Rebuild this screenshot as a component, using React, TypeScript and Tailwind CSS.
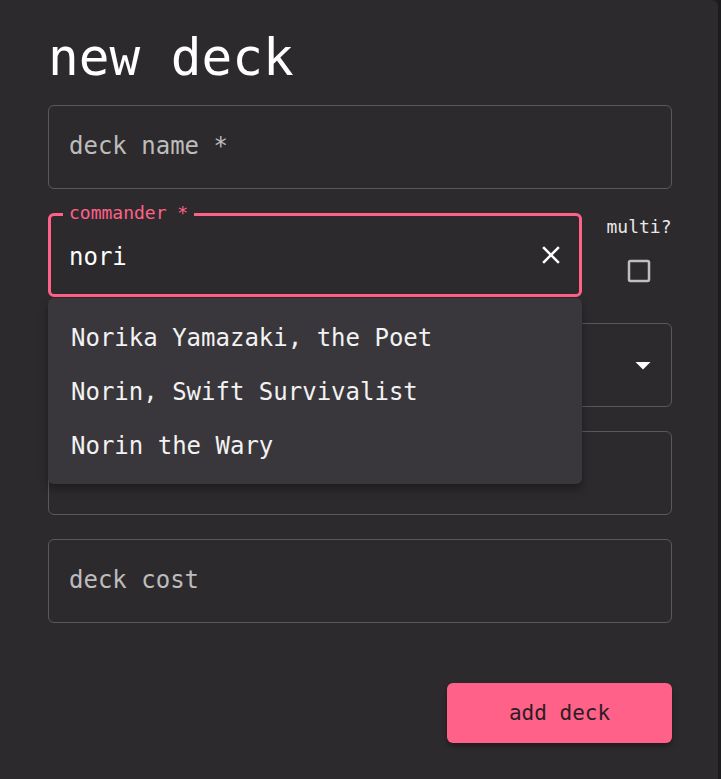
import React from "react";

const mono = { fontFamily: '"DejaVu Sans Mono", "Liberation Mono", monospace' };

function TextField({ label, mt }: { label: string; mt: string }) {
  return (
    <div className={`${mt} h-[84px] rounded-[6px] border border-[#5a585b] flex items-center pl-[20px] pb-[3px]`}>
      <span className="text-[24px] leading-[24px] text-[#bdbcbd]">{label}</span>
    </div>
  );
}

export default function App() {
  return (
    <div className="min-h-screen bg-[#1c1b1d]" style={mono}>
      <div className="w-[718px] h-[779px] bg-[#2d2a2e] rounded-tr-[6px] pl-12 pr-[46px] pt-[28px]">
        <h1 className="text-[51px] leading-[60px] text-white">new deck</h1>
        <div className="flex flex-col">
          <TextField label="deck name *" mt="mt-[17px]" />

          <div className="mt-[24px] flex">
            <div className="relative w-[534px] h-[84px] rounded-[6px] border-[3px] border-[#ff6188] flex items-center pl-[18px] pt-[3px]">
              <span className="absolute left-[12px] top-[-12px] px-[6px] bg-[#2d2a2e] text-[18px] leading-[18px] text-[#ff6188]">
                commander *
              </span>
              <span className="text-[24px] leading-[24px] text-white">nori</span>
              <svg
                className="absolute right-[13px] top-1/2 -translate-y-1/2"
                width="30"
                height="30"
                viewBox="0 0 24 24"
                fill="#ffffff"
              >
                <path d="M19 6.41 17.59 5 12 10.59 6.41 5 5 6.41 10.59 12 5 17.59 6.41 19 12 13.41 17.59 19 19 17.59 13.41 12z" />
              </svg>

              <div className="absolute left-[-3px] top-[calc(100%+4px)] w-[534px] rounded-[6px] bg-[#39373b] pt-[13px] pb-[11px] shadow-[0_5px_8px_rgba(0,0,0,0.35)] z-10">
                {["Norika Yamazaki, the Poet", "Norin, Swift Survivalist", "Norin the Wary"].map((t) => (
                  <div key={t} className="h-[54px] flex items-center pl-[23px] text-[24px] leading-[24px] text-[#f2f2f2]">
                    {t}
                  </div>
                ))}
              </div>
            </div>
            <div className="ml-auto flex flex-col items-center pt-[2px] w-[66px]">
              <span className="text-[18px] leading-[24px] text-[#e8e8e8]">multi?</span>
              <svg className="mt-[17px]" width="30" height="30" viewBox="0 0 24 24" fill="rgba(255,255,255,0.7)">
                <path d="M19 5v14H5V5h14m0-2H5c-1.11 0-2 .9-2 2v14c0 1.1.89 2 2 2h14c1.1 0 2-.9 2-2V5c0-1.1-.9-2-2-2z" />
              </svg>
            </div>
          </div>

          <div className="mt-[26px] relative h-[84px] rounded-[6px] border border-[#5a585b]">
            <svg
              className="absolute right-[10px] top-1/2 -translate-y-1/2"
              width="36"
              height="36"
              viewBox="0 0 24 24"
              fill="#ffffff"
            >
              <path d="M7 10l5 5 5-5z" />
            </svg>
          </div>

          <TextField label="" mt="mt-[24px]" />
          <TextField label="deck cost" mt="mt-[24px]" />
        </div>

        <div className="flex justify-end mt-[60px]">
          <button className="w-[225px] h-[60px] rounded-[6px] bg-[#ff6188] text-[21px] leading-[21px] text-[#2a1e24] shadow-[0_3px_5px_rgba(0,0,0,0.35)]">
            add deck
          </button>
        </div>
      </div>
    </div>
  );
}
